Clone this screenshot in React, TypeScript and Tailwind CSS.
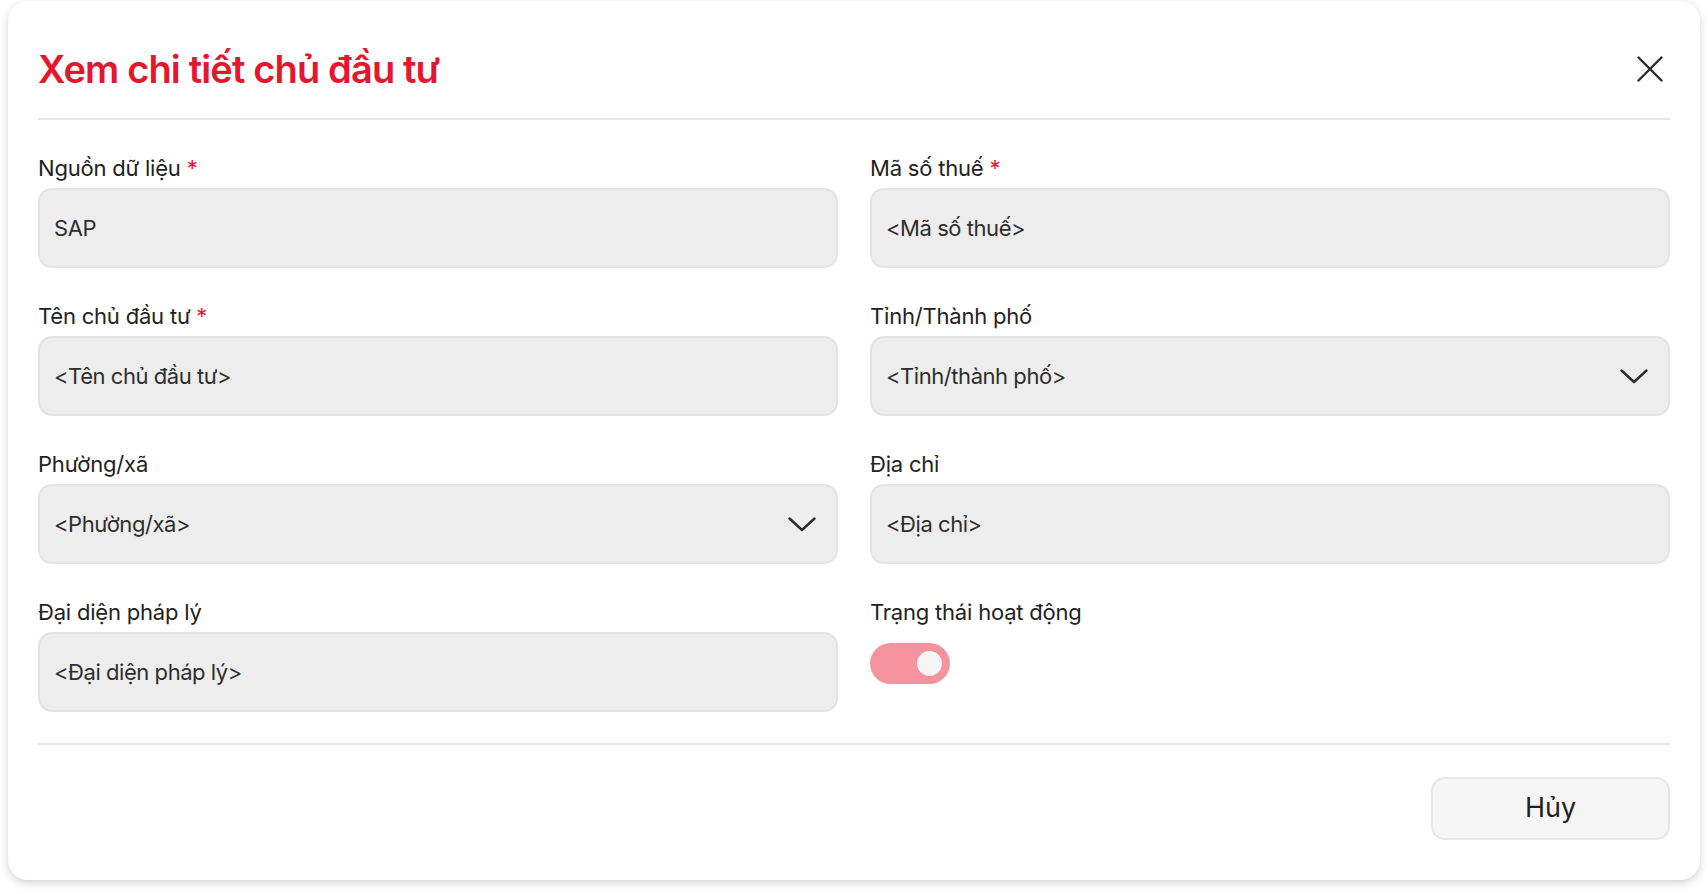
import { ReactNode } from "react"

const ChevronDown = () => (
  <svg width="28" height="15" viewBox="0 0 28 15" fill="none" className="shrink-0">
    <path d="M1.5 1.5L14 13L26.5 1.5" stroke="#2b2b2b" strokeWidth="2.4" strokeLinecap="round" strokeLinejoin="round" />
  </svg>
)

const CloseIcon = () => (
  <svg width="26" height="26" viewBox="0 0 26 26" fill="none">
    <path d="M1.5 1.5L24.5 24.5M24.5 1.5L1.5 24.5" stroke="#2b2b2b" strokeWidth="2.4" strokeLinecap="round" />
  </svg>
)

const Field = ({ label, required, children }: { label: string, required?: boolean, children: ReactNode }) => (
  <div className="flex flex-col">
    <label className="text-[22px] leading-[28px] text-[#222] tracking-[-0.2px]">
      {label}
      {required && <span className="text-[#e5162d] ml-[6px]">*</span>}
    </label>
    {children}
  </div>
)

const Input = ({ value, select }: { value: string, select?: boolean }) => (
  <div className="mt-[6px] h-[80px] flex items-center justify-between rounded-[14px] border-2 border-[#e3e3e3] bg-[#ededed] pl-[14px] pr-[20px]">
    <span className="text-[22px] text-[#2e2e2e] tracking-[-0.45px]">{value}</span>
    {select && <ChevronDown />}
  </div>
)

const App = () => {
  return (
    <div className="min-h-screen bg-white pl-[8px] pt-[1px]" style={{ fontFamily: "Inter, 'Noto Sans', sans-serif" }}>
      <div className="w-[1692px] rounded-[20px] bg-white px-[30px] shadow-[0_3px_8px_rgba(0,0,0,0.18)]">
        {/* HEADER */}
        <div className="flex items-center justify-between border-b-2 border-[#e6e6e6] pt-[45px] pb-[26px]">
          <h1 className="text-[38px] leading-[46px] font-semibold text-[#e5162d] tracking-[-0.85px]">Xem chi tiết chủ đầu tư</h1>
          <button className="mr-[7px]"><CloseIcon /></button>
        </div>

        {/* FORM */}
        <div className="grid grid-cols-2 gap-x-[32px] gap-y-[34px] pt-[34px]">
          <Field label="Nguồn dữ liệu" required>
            <Input value="SAP" />
          </Field>
          <Field label="Mã số thuế" required>
            <Input value="<Mã số thuế>" />
          </Field>
          <Field label="Tên chủ đầu tư" required>
            <Input value="<Tên chủ đầu tư>" />
          </Field>
          <Field label="Tỉnh/Thành phố">
            <Input value="<Tỉnh/thành phố>" select />
          </Field>
          <Field label="Phường/xã">
            <Input value="<Phường/xã>" select />
          </Field>
          <Field label="Địa chỉ">
            <Input value="<Địa chỉ>" />
          </Field>
          <Field label="Đại diện pháp lý">
            <Input value="<Đại diện pháp lý>" />
          </Field>
          <Field label="Trạng thái hoạt động">
            <div className="mt-[17px] h-[41px] w-[80px] rounded-full bg-[#f4929e] flex items-center justify-end pr-[8px]">
              <span className="h-[25px] w-[25px] rounded-full bg-[#f6f6f6]"></span>
            </div>
          </Field>
        </div>

        {/* FOOTER */}
        <div className="mt-[31px] border-t-2 border-[#e6e6e6] pt-[32px] pb-[40px] flex justify-end">
          <button className="h-[63px] w-[239px] rounded-[14px] border-2 border-[#e6e6e6] bg-[#f6f6f6] text-[27px] text-[#222]">Hủy</button>
        </div>
      </div>
    </div>
  )
}

export default App
